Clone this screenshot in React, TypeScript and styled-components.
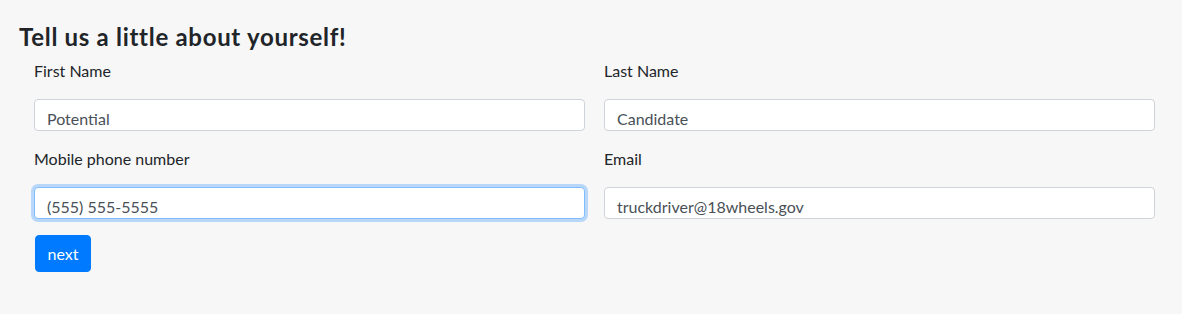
import React, { useEffect, useRef, useState } from "react";
import styled, { createGlobalStyle, css } from "styled-components";

const GlobalStyle = createGlobalStyle`
  html, body {
    margin: 0;
    padding: 0;
    background: #f7f7f7;
  }
  body {
    font-family: Lato, "Noto Sans", "Liberation Sans", sans-serif;
    color: #212529;
  }
  * {
    box-sizing: border-box;
  }
`;

interface FieldProps {
  label: string;
  value: string;
  focused?: boolean;
  onChange: (value: string) => void;
}

function Field({ label, value, focused, onChange }: FieldProps) {
  const inputRef = useRef<HTMLInputElement>(null);

  // the phone field is the active one: put the caret after its text
  useEffect(() => {
    if (focused && inputRef.current) {
      const el = inputRef.current;
      el.focus();
      el.setSelectionRange(el.value.length, el.value.length);
    }
  }, [focused]);

  return (
    <FieldGroup>
      <FieldLabel>{label}</FieldLabel>
      <TextInput
        ref={inputRef}
        $focused={focused}
        value={value}
        onChange={(event: React.ChangeEvent<HTMLInputElement>) =>
          onChange(event.target.value)
        }
      />
    </FieldGroup>
  );
}

export default function App() {
  const [firstName, setFirstName] = useState("Potential");
  const [lastName, setLastName] = useState("Candidate");
  const [phone, setPhone] = useState("(555) 555-5555");
  const [email, setEmail] = useState("truckdriver@18wheels.gov");

  return (
    <>
      <GlobalStyle />
      <Page>
        <Title>Tell us a little about yourself!</Title>
        <FormGrid>
          <Field label="First Name" value={firstName} onChange={setFirstName} />
          <Field label="Last Name" value={lastName} onChange={setLastName} />
          <Field
            label="Mobile phone number"
            value={phone}
            onChange={setPhone}
            focused
          />
          <Field label="Email" value={email} onChange={setEmail} />
        </FormGrid>
        <Actions>
          <PrimaryButton type="button">next</PrimaryButton>
        </Actions>
      </Page>
    </>
  );
}

const Page = styled.div`
  width: 1182px;
  height: 314px;
  padding: 22px 27px 0 19px;
`;

const Title = styled.h4`
  margin: 0 0 8px;
  font-size: 24px;
  font-weight: 700;
  line-height: 29px;
  letter-spacing: 0.7px;
`;

const FormGrid = styled.div`
  display: grid;
  grid-template-columns: 1fr 1fr;
  column-gap: 19px;
  row-gap: 16px;
  padding-left: 15px;
`;

const FieldGroup = styled.div`
  display: flex;
  flex-direction: column;
`;

const FieldLabel = styled.label`
  font-size: 16px;
  line-height: 24px;
  margin-bottom: 16px;
`;

const TextInput = styled.input<{ $focused?: boolean }>`
  height: 32px;
  width: 100%;
  padding: 6px 12px 0;
  font-family: inherit;
  font-size: 16px;
  line-height: 24px;
  color: #495057;
  caret-color: #212529;
  background: #fff;
  border: 1px solid #ced4da;
  border-radius: 4px;
  outline: none;

  ${({ $focused }) =>
    $focused &&
    css`
      border-color: #80bdff;
      box-shadow: 0 0 0 3px rgba(0, 123, 255, 0.25);
    `}
`;

const Actions = styled.div`
  padding: 16px 0 0 16px;
`;

const PrimaryButton = styled.button`
  height: 37px;
  width: 56px;
  padding: 0;
  font-family: inherit;
  font-size: 16px;
  color: #fff;
  background: #007bff;
  border: 1px solid #007bff;
  border-radius: 4px;
  cursor: pointer;
`;
